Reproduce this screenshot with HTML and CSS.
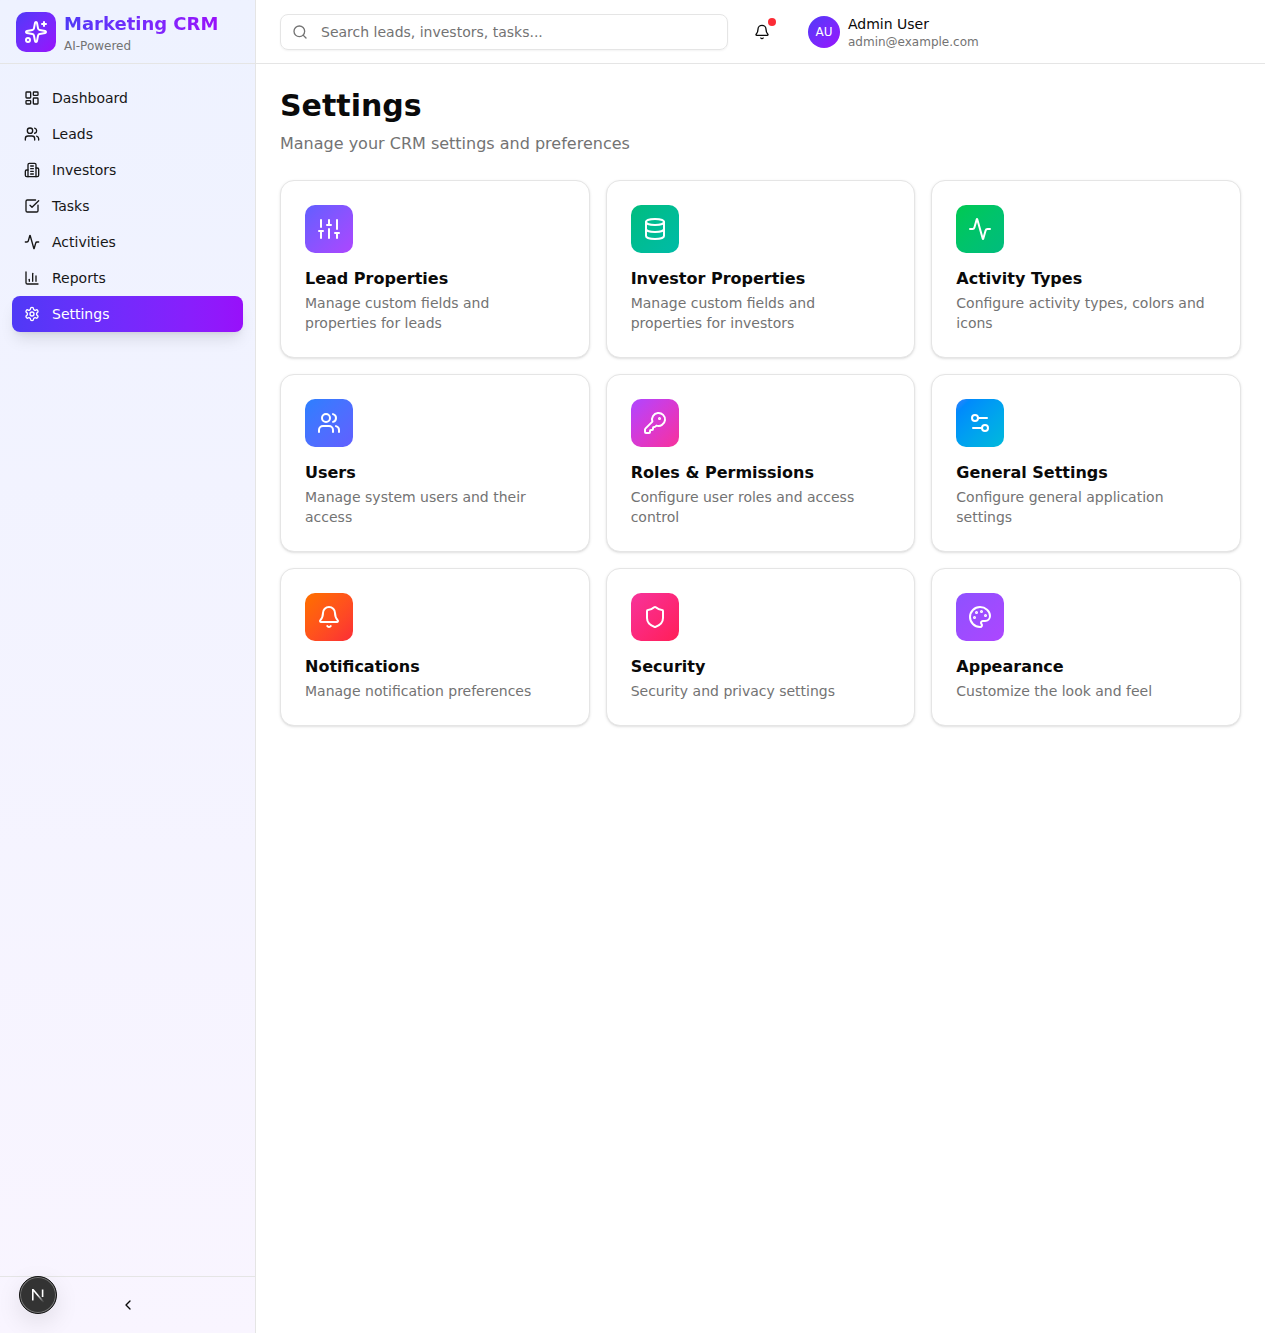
FILE: index.html
```html
<!DOCTYPE html>
<html lang="en">
<head>
    <meta charset="UTF-8">
    <meta name="viewport" content="width=device-width, initial-scale=1.0">
    <title>Marketing CRM - Settings</title>
    <link rel="stylesheet" href="styles.css">
</head>
<body>
    <div class="app">
        <aside class="sidebar">
            <div class="brand">
                <div class="brand-logo">
                    <svg class="icon icon-24" viewBox="0 0 24 24"><path d="M11.017 2.814a1 1 0 0 1 1.966 0l1.051 5.558a2 2 0 0 0 1.594 1.594l5.558 1.051a1 1 0 0 1 0 1.966l-5.558 1.051a2 2 0 0 0-1.594 1.594l-1.051 5.558a1 1 0 0 1-1.966 0l-1.051-5.558a2 2 0 0 0-1.594-1.594l-5.558-1.051a1 1 0 0 1 0-1.966l5.558-1.051a2 2 0 0 0 1.594-1.594z"/><path d="M20 2v4"/><path d="M22 4h-4"/><circle cx="4" cy="20" r="2"/></svg>
                </div>
                <div class="brand-text">
                    <div class="brand-name">Marketing CRM</div>
                    <div class="brand-tag">AI-Powered</div>
                </div>
            </div>

            <nav class="nav">
                <a class="nav-item" href="#">
                    <svg class="icon" viewBox="0 0 24 24"><rect x="3" y="3" width="7" height="9" rx="1"/><rect x="14" y="3" width="7" height="5" rx="1"/><rect x="14" y="12" width="7" height="9" rx="1"/><rect x="3" y="16" width="7" height="5" rx="1"/></svg>
                    Dashboard
                </a>
                <a class="nav-item" href="#">
                    <svg class="icon" viewBox="0 0 24 24"><path d="M16 21v-2a4 4 0 0 0-4-4H6a4 4 0 0 0-4 4v2"/><path d="M16 3.128a4 4 0 0 1 0 7.744"/><path d="M22 21v-2a4 4 0 0 0-3-3.87"/><circle cx="9" cy="7" r="4"/></svg>
                    Leads
                </a>
                <a class="nav-item" href="#">
                    <svg class="icon" viewBox="0 0 24 24"><path d="M6 22V4a2 2 0 0 1 2-2h8a2 2 0 0 1 2 2v18Z"/><path d="M6 12H4a2 2 0 0 0-2 2v6a2 2 0 0 0 2 2h2"/><path d="M18 9h2a2 2 0 0 1 2 2v9a2 2 0 0 1-2 2h-2"/><path d="M10 6h4"/><path d="M10 10h4"/><path d="M10 14h4"/><path d="M10 18h4"/></svg>
                    Investors
                </a>
                <a class="nav-item" href="#">
                    <svg class="icon" viewBox="0 0 24 24"><path d="M21 10.656V19a2 2 0 0 1-2 2H5a2 2 0 0 1-2-2V5a2 2 0 0 1 2-2h12.344"/><path d="m9 11 3 3L22 4"/></svg>
                    Tasks
                </a>
                <a class="nav-item" href="#">
                    <svg class="icon" viewBox="0 0 24 24"><path d="M22 12h-2.48a2 2 0 0 0-1.93 1.46l-2.35 8.36a.25.25 0 0 1-.48 0L9.24 2.18a.25.25 0 0 0-.48 0l-2.35 8.36A2 2 0 0 1 4.49 12H2"/></svg>
                    Activities
                </a>
                <a class="nav-item" href="#">
                    <svg class="icon" viewBox="0 0 24 24"><path d="M3 3v16a2 2 0 0 0 2 2h16"/><path d="M18 17V9"/><path d="M13 17V5"/><path d="M8 17v-3"/></svg>
                    Reports
                </a>
                <a class="nav-item active" href="#">
                    <svg class="icon" viewBox="0 0 24 24"><path d="M12.22 2h-.44a2 2 0 0 0-2 2v.18a2 2 0 0 1-1 1.73l-.43.25a2 2 0 0 1-2 0l-.15-.08a2 2 0 0 0-2.73.73l-.22.38a2 2 0 0 0 .73 2.73l.15.1a2 2 0 0 1 1 1.72v.51a2 2 0 0 1-1 1.74l-.15.09a2 2 0 0 0-.73 2.73l.22.38a2 2 0 0 0 2.73.73l.15-.08a2 2 0 0 1 2 0l.43.25a2 2 0 0 1 1 1.73V20a2 2 0 0 0 2 2h.44a2 2 0 0 0 2-2v-.18a2 2 0 0 1 1-1.73l.43-.25a2 2 0 0 1 2 0l.15.08a2 2 0 0 0 2.73-.73l.22-.39a2 2 0 0 0-.73-2.73l-.15-.08a2 2 0 0 1-1-1.74v-.5a2 2 0 0 1 1-1.74l.15-.09a2 2 0 0 0 .73-2.73l-.22-.38a2 2 0 0 0-2.73-.73l-.15.08a2 2 0 0 1-2 0l-.43-.25a2 2 0 0 1-1-1.73V4a2 2 0 0 0-2-2z"/><circle cx="12" cy="12" r="3"/></svg>
                    Settings
                </a>
            </nav>

            <div class="sidebar-footer">
                <svg class="icon" viewBox="0 0 24 24"><path d="m15 18-6-6 6-6"/></svg>
            </div>
        </aside>

        <div class="content">
            <header class="topbar">
                <div class="search">
                    <svg class="icon search-icon" viewBox="0 0 24 24"><path d="m21 21-4.34-4.34"/><circle cx="11" cy="11" r="8"/></svg>
                    <input type="text" placeholder="Search leads, investors, tasks...">
                </div>
                <div class="bell">
                    <svg class="icon" viewBox="0 0 24 24"><path d="M10.268 21a2 2 0 0 0 3.464 0"/><path d="M3.262 15.326A1 1 0 0 0 4 17h16a1 1 0 0 0 .74-1.673C19.41 13.956 18 12.499 18 8A6 6 0 0 0 6 8c0 4.499-1.411 5.956-2.738 7.326"/></svg>
                    <span class="bell-dot"></span>
                </div>
                <div class="user">
                    <div class="avatar">AU</div>
                    <div>
                        <div class="user-name">Admin User</div>
                        <div class="user-email">admin@example.com</div>
                    </div>
                </div>
            </header>

            <main class="main">
                <h1>Settings</h1>
                <p class="subtitle">Manage your CRM settings and preferences</p>

                <div class="card-grid">
                    <div class="card">
                        <div class="card-icon grad-lead">
                            <svg class="icon icon-24" viewBox="0 0 24 24"><path d="M4 21v-7"/><path d="M4 10V3"/><path d="M12 21v-9"/><path d="M12 8V3"/><path d="M20 21v-5"/><path d="M20 12V3"/><path d="M2 14h4"/><path d="M10 8h4"/><path d="M18 16h4"/></svg>
                        </div>
                        <h3>Lead Properties</h3>
                        <p>Manage custom fields and properties for leads</p>
                    </div>
                    <div class="card">
                        <div class="card-icon grad-investor">
                            <svg class="icon icon-24" viewBox="0 0 24 24"><ellipse cx="12" cy="5" rx="9" ry="3"/><path d="M3 5V19A9 3 0 0 0 21 19V5"/><path d="M3 12A9 3 0 0 0 21 12"/></svg>
                        </div>
                        <h3>Investor Properties</h3>
                        <p>Manage custom fields and properties for investors</p>
                    </div>
                    <div class="card">
                        <div class="card-icon grad-activity">
                            <svg class="icon icon-24" viewBox="0 0 24 24"><path d="M22 12h-2.48a2 2 0 0 0-1.93 1.46l-2.35 8.36a.25.25 0 0 1-.48 0L9.24 2.18a.25.25 0 0 0-.48 0l-2.35 8.36A2 2 0 0 1 4.49 12H2"/></svg>
                        </div>
                        <h3>Activity Types</h3>
                        <p>Configure activity types, colors and icons</p>
                    </div>
                    <div class="card">
                        <div class="card-icon grad-users">
                            <svg class="icon icon-24" viewBox="0 0 24 24"><path d="M16 21v-2a4 4 0 0 0-4-4H6a4 4 0 0 0-4 4v2"/><path d="M16 3.128a4 4 0 0 1 0 7.744"/><path d="M22 21v-2a4 4 0 0 0-3-3.87"/><circle cx="9" cy="7" r="4"/></svg>
                        </div>
                        <h3>Users</h3>
                        <p>Manage system users and their access</p>
                    </div>
                    <div class="card">
                        <div class="card-icon grad-roles">
                            <svg class="icon icon-24" viewBox="0 0 24 24"><path d="M2.586 17.414A2 2 0 0 0 2 18.828V21a1 1 0 0 0 1 1h3a1 1 0 0 0 1-1v-1a1 1 0 0 1 1-1h1a1 1 0 0 0 1-1v-1a1 1 0 0 1 1-1h.172a2 2 0 0 0 1.414-.586l.814-.814a6.5 6.5 0 1 0-4-4z"/><circle cx="16.5" cy="7.5" r=".5" fill="currentColor"/></svg>
                        </div>
                        <h3>Roles &amp; Permissions</h3>
                        <p>Configure user roles and access control</p>
                    </div>
                    <div class="card">
                        <div class="card-icon grad-general">
                            <svg class="icon icon-24" viewBox="0 0 24 24"><path d="M14 17H5"/><path d="M19 7h-9"/><circle cx="17" cy="17" r="3"/><circle cx="7" cy="7" r="3"/></svg>
                        </div>
                        <h3>General Settings</h3>
                        <p>Configure general application settings</p>
                    </div>
                    <div class="card">
                        <div class="card-icon grad-notify">
                            <svg class="icon icon-24" viewBox="0 0 24 24"><path d="M10.268 21a2 2 0 0 0 3.464 0"/><path d="M3.262 15.326A1 1 0 0 0 4 17h16a1 1 0 0 0 .74-1.673C19.41 13.956 18 12.499 18 8A6 6 0 0 0 6 8c0 4.499-1.411 5.956-2.738 7.326"/></svg>
                        </div>
                        <h3>Notifications</h3>
                        <p>Manage notification preferences</p>
                    </div>
                    <div class="card">
                        <div class="card-icon grad-security">
                            <svg class="icon icon-24" viewBox="0 0 24 24"><path d="M20 13c0 5-3.5 7.5-7.66 8.95a1 1 0 0 1-.67-.01C7.5 20.5 4 18 4 13V6a1 1 0 0 1 1-1c2 0 4.5-1.2 6.24-2.72a1.17 1.17 0 0 1 1.52 0C14.51 3.81 17 5 19 5a1 1 0 0 1 1 1z"/></svg>
                        </div>
                        <h3>Security</h3>
                        <p>Security and privacy settings</p>
                    </div>
                    <div class="card">
                        <div class="card-icon grad-appearance">
                            <svg class="icon icon-24" viewBox="0 0 24 24"><path d="M12 22a1 1 0 0 1 0-20 10 9 0 0 1 10 9 5 5 0 0 1-5 5h-2.25a1.75 1.75 0 0 0-1.4 2.8l.3.4a1.75 1.75 0 0 1-1.4 2.8z"/><circle cx="13.5" cy="6.5" r=".5" fill="currentColor"/><circle cx="17.5" cy="10.5" r=".5" fill="currentColor"/><circle cx="6.5" cy="12.5" r=".5" fill="currentColor"/><circle cx="8.5" cy="7.5" r=".5" fill="currentColor"/></svg>
                        </div>
                        <h3>Appearance</h3>
                        <p>Customize the look and feel</p>
                    </div>
                </div>
            </main>
        </div>
    </div>

    <div class="dev-badge">
        <svg viewBox="0 0 20 20" width="20" height="20">
            <defs>
                <linearGradient id="n-fade" gradientUnits="userSpaceOnUse" x1="4" y1="4" x2="15" y2="16">
                    <stop offset="0.5" stop-color="#fff"/>
                    <stop offset="1" stop-color="#fff" stop-opacity="0.1"/>
                </linearGradient>
            </defs>
            <path class="dev-n" d="M4.8 15.5V4.8h.4L15.5 17" stroke="url(#n-fade)"/>
            <path class="dev-n" d="M14.6 4.5v7.5" stroke="#fff"/>
        </svg>
    </div>
</body>
</html>
```

FILE: styles.css
```css
* {
    box-sizing: border-box;
}
body {
    margin: 0;
    font-family: "DejaVu Sans", sans-serif;
    color: #0a0a0a;
    background-color: #fff;
}
.icon {
    width: 16px;
    height: 16px;
    fill: none;
    stroke: currentColor;
    stroke-width: 2;
    stroke-linecap: round;
    stroke-linejoin: round;
    flex-shrink: 0;
}
.icon-24 {
    width: 24px;
    height: 24px;
}
.app {
    display: flex;
    height: 100vh;
}

/* sidebar */
.sidebar {
    width: 256px;
    flex-shrink: 0;
    display: flex;
    flex-direction: column;
    background: linear-gradient(to bottom in oklab, #eef2ff, #f9f5ff);
    border-right: 1px solid #e5e5e5;
}
.brand {
    height: 64px;
    display: flex;
    align-items: center;
    gap: 8px;
    padding: 0 16px;
    border-bottom: 1px solid #e5e5e5;
}
.brand-logo {
    width: 40px;
    height: 40px;
    border-radius: 10px;
    display: flex;
    align-items: center;
    justify-content: center;
    color: #fff;
    background: linear-gradient(to bottom right in oklch, #4f39f6, #9810fa);
}
.brand-text {
    padding-top: 2px;
}
.brand-name {
    font-size: 18px;
    line-height: 24px;
    font-weight: 700;
    background: linear-gradient(to right in oklch, #4f39f6, #9810fa);
    -webkit-background-clip: text;
    background-clip: text;
    color: transparent;
}
.brand-tag {
    margin-top: 2px;
    font-size: 12px;
    line-height: 16px;
    color: #737373;
}
.nav {
    flex: 1;
    padding: 16px 12px;
}
.nav-item {
    height: 36px;
    display: flex;
    align-items: center;
    gap: 12px;
    padding: 0 12px;
    border-radius: 8px;
    font-size: 14px;
    color: #171717;
    text-decoration: none;
}
.nav-item.active {
    color: #fff;
    background: linear-gradient(to right in oklch, #4f39f6, #9810fa);
    box-shadow: 0 10px 15px -3px rgba(0, 0, 0, 0.1), 0 4px 6px -4px rgba(0, 0, 0, 0.1);
}
.sidebar-footer {
    height: 57px;
    display: flex;
    align-items: center;
    justify-content: center;
    border-top: 1px solid #e5e5e5;
}

/* top bar */
.content {
    flex: 1;
    min-width: 0;
    display: flex;
    flex-direction: column;
}
.topbar {
    height: 64px;
    flex-shrink: 0;
    display: flex;
    align-items: center;
    padding: 0 24px;
    border-bottom: 1px solid #e5e5e5;
}
.search {
    width: 448px;
    height: 36px;
    display: flex;
    align-items: center;
    gap: 13px;
    padding: 0 12px 0 11px;
    border: 1px solid #e5e5e5;
    border-radius: 8px;
    box-shadow: 0 1px 2px rgba(0, 0, 0, 0.05);
}
.search-icon {
    color: #737373;
}
.search input {
    flex: 1;
    min-width: 0;
    border: none;
    outline: none;
    padding: 0;
    background: transparent;
    font-family: inherit;
    font-size: 14px;
    color: #0a0a0a;
}
.search input::placeholder {
    color: #737373;
    opacity: 1;
}
.bell {
    position: relative;
    width: 36px;
    height: 36px;
    margin-left: 16px;
    display: flex;
    align-items: center;
    justify-content: center;
}
.bell-dot {
    position: absolute;
    top: 4px;
    right: 4px;
    width: 8px;
    height: 8px;
    border-radius: 50%;
    background-color: #fb2c36;
}
.user {
    display: flex;
    align-items: center;
    gap: 8px;
    margin-left: 28px;
}
.avatar {
    width: 32px;
    height: 32px;
    border-radius: 50%;
    display: flex;
    align-items: center;
    justify-content: center;
    font-size: 12px;
    color: #fff;
    background: linear-gradient(to bottom right in oklch, #4f39f6, #9810fa);
}
.user-name {
    font-size: 14px;
    line-height: 20px;
}
.user-email {
    font-size: 12px;
    line-height: 16px;
    color: #737373;
}

/* settings cards */
.main {
    flex: 1;
    padding: 24px;
}
h1 {
    margin: 0 0 8px;
    font-size: 30px;
    line-height: 36px;
    font-weight: 700;
}
.subtitle {
    margin: 0 0 24px;
    font-size: 16px;
    line-height: 24px;
    color: #737373;
}
.card-grid {
    display: grid;
    grid-template-columns: repeat(3, 1fr);
    gap: 16px;
}
.card {
    padding: 24px;
    background-color: #fff;
    border: 1px solid #e5e5e5;
    border-radius: 14px;
    box-shadow: 0 1px 3px rgba(0, 0, 0, 0.1), 0 1px 2px -1px rgba(0, 0, 0, 0.1);
}
.card-icon {
    width: 48px;
    height: 48px;
    margin-bottom: 12px;
    border-radius: 10px;
    display: flex;
    align-items: center;
    justify-content: center;
    color: #fff;
}
.card h3 {
    margin: 0;
    font-size: 16px;
    line-height: 28px;
    font-weight: 700;
}
.card p {
    margin: 0;
    font-size: 14px;
    line-height: 20px;
    color: #737373;
}
.grad-lead { background: linear-gradient(to bottom right in oklch, #615fff, #ad46ff); }
.grad-investor { background: linear-gradient(to bottom right in oklch, #00bc7d, #00bba7); }
.grad-activity { background: linear-gradient(to bottom right in oklch, #00c950, #00bc7d); }
.grad-users { background: linear-gradient(to bottom right in oklch, #2b7fff, #615fff); }
.grad-roles { background: linear-gradient(to bottom right in oklch, #ad46ff, #f6339a); }
.grad-general { background: linear-gradient(to bottom right in oklch, #2b7fff, #00b8db); }
.grad-notify { background: linear-gradient(to bottom right in oklch, #ff7000, #fb2c36); }
.grad-security { background: linear-gradient(to bottom right in oklch, #f6339a, #ff2056); }
.grad-appearance { background: linear-gradient(to bottom right in oklch, #8e51ff, #ad46ff); }

/* dev tools badge, sits over the sidebar */
.dev-badge {
    position: fixed;
    left: 19px;
    bottom: 19px;
    width: 38px;
    height: 38px;
    border-radius: 50%;
    display: flex;
    align-items: center;
    justify-content: center;
    background-color: #333;
    border: 1px solid #111;
    box-shadow: 0 0 0 1px #777 inset, 0 8px 24px rgba(0, 0, 0, 0.1);
}
.dev-n {
    fill: none;
    stroke-width: 1.6;
}
```
